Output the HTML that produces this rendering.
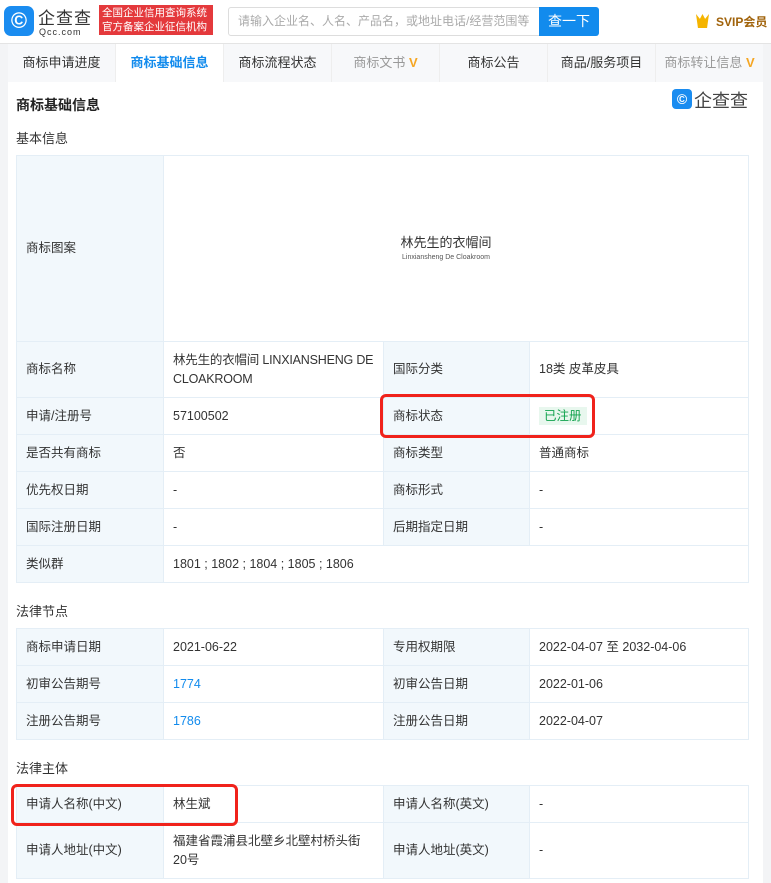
<!DOCTYPE html>
<html><head><meta charset="utf-8"><style>
*{box-sizing:border-box;margin:0;padding:0}
body{width:771px;height:883px;overflow:hidden;background:#f3f4f6;font-family:"Liberation Sans","Noto Sans CJK SC",sans-serif;font-size:13px;color:#333;position:relative}
.hdr{position:absolute;left:0;top:0;width:771px;height:44px;background:#fff;border-bottom:1px solid #e4e4e4}
.abs{position:absolute;white-space:nowrap}
.tabs{position:absolute;left:8px;top:44px;width:755px;height:38px;background:#f7f8fa;display:flex}
.tabs div{flex:1;text-align:center;line-height:38px;color:#333;border-right:1px solid #eee;white-space:nowrap}
.card{position:absolute;left:8px;top:82px;width:755px;height:801px;background:#fff}
table{position:absolute;left:16px;border-collapse:collapse;width:733px;table-layout:fixed}
td{border:1px solid #e4eef6;padding:0 9px;vertical-align:middle;line-height:19px;font-size:12.5px}
td.l{background:#f2f8fc;color:#333}
.sec{position:absolute;left:16px;font-size:13px;color:#333}
.red{position:absolute;border:3px solid #f0221b;border-radius:6px}
a{color:#128bed;text-decoration:none}
</style></head><body>
<div class="hdr">
 <div class="abs" style="left:4px;top:6px;width:30px;height:30px;background:#1a8cf0;border-radius:7px;color:#fff;font-size:22px;line-height:30px;text-align:center;font-weight:bold">©</div>
 <div class="abs" style="left:38px;top:4px;font-size:17px;color:#333;letter-spacing:1px">企查查</div>
 <div class="abs" style="left:39px;top:27px;font-size:9px;color:#333;letter-spacing:1px">Qcc.com</div>
 <div class="abs" style="left:99px;top:5px;width:114px;height:30px;background:#e4393c;color:#fff;font-size:10.5px;line-height:14px;padding:1px 3px">全国企业信用查询系统<br>官方备案企业征信机构</div>
 <div class="abs" style="left:228px;top:7px;width:312px;height:29px;border:1px solid #ddd;border-radius:3px 0 0 3px;color:#aaa;font-size:12px;line-height:27px;padding-left:9px;overflow:hidden">请输入企业名、人名、产品名，或地址电话/经营范围等</div>
 <div class="abs" style="left:539px;top:7px;width:60px;height:29px;background:#128bed;color:#fff;line-height:29px;text-align:center;font-size:14px;border-radius:0 3px 3px 0">查一下</div>
 <div class="abs" style="left:696px;top:14px;width:13px;height:14px;background:#f5b400;clip-path:polygon(0 0,30% 35%,50% 0,70% 35%,100% 0,85% 100%,15% 100%)"></div>
 <div class="abs" style="left:716px;top:13px;font-size:12px;color:#a0620a;font-weight:bold">SVIP会员</div>
</div>
<div class="tabs">
 <div>商标申请进度</div><div style="color:#128bed;font-weight:bold;background:#fff">商标基础信息</div><div>商标流程状态</div><div style="color:#999">商标文书 <span style="color:#f5a623;font-weight:bold">V</span></div><div>商标公告</div><div>商品/服务项目</div><div style="color:#999;border:none">商标转让信息 <span style="color:#f5a623;font-weight:bold">V</span></div>
</div>
<div class="card"></div>
<div class="sec" style="top:95px;font-weight:bold;font-size:14px;color:#222">商标基础信息</div>
<div class="abs" style="left:672px;top:89px;width:20px;height:20px;background:#1a8cf0;border-radius:4px;color:#fff;font-size:14px;line-height:20px;text-align:center;font-weight:bold">©</div>
<div class="abs" style="left:694px;top:87px;font-size:18px;color:#444">企查查</div>
<div class="sec" style="top:128px">基本信息</div>
<table style="top:155px;width:732px">
<colgroup><col style="width:147px"><col style="width:220px"><col style="width:146px"><col style="width:219px"></colgroup>
<tr style="height:186px"><td class="l">商标图案</td><td colspan="3" style="text-align:center"><div style="font-size:13px;color:#333;margin-left:-20px">林先生的衣帽间</div><div style="font-size:7px;color:#555;margin-left:-20px;line-height:12px">Linxiansheng De Cloakroom</div></td></tr>
<tr style="height:56px"><td class="l">商标名称</td><td style="padding-right:4px;letter-spacing:-0.2px">林先生的衣帽间 LINXIANSHENG DE CLOAKROOM</td><td class="l">国际分类</td><td>18类 皮革皮具</td></tr>
<tr style="height:37px"><td class="l">申请/注册号</td><td>57100502</td><td class="l">商标状态</td><td><span style="background:#e8f7ee;color:#12a34e;padding:2px 5px">已注册</span></td></tr>
<tr style="height:37px"><td class="l">是否共有商标</td><td>否</td><td class="l">商标类型</td><td>普通商标</td></tr>
<tr style="height:37px"><td class="l">优先权日期</td><td>-</td><td class="l">商标形式</td><td>-</td></tr>
<tr style="height:37px"><td class="l">国际注册日期</td><td>-</td><td class="l">后期指定日期</td><td>-</td></tr>
<tr style="height:37px"><td class="l">类似群</td><td colspan="3">1801 ; 1802 ; 1804 ; 1805 ; 1806</td></tr>
</table>
<div class="sec" style="top:601px">法律节点</div>
<table style="top:628px;width:732px">
<colgroup><col style="width:147px"><col style="width:220px"><col style="width:146px"><col style="width:219px"></colgroup>
<tr style="height:37px"><td class="l">商标申请日期</td><td>2021-06-22</td><td class="l">专用权期限</td><td>2022-04-07 至 2032-04-06</td></tr>
<tr style="height:37px"><td class="l">初审公告期号</td><td><a>1774</a></td><td class="l">初审公告日期</td><td>2022-01-06</td></tr>
<tr style="height:37px"><td class="l">注册公告期号</td><td><a>1786</a></td><td class="l">注册公告日期</td><td>2022-04-07</td></tr>
</table>
<div class="sec" style="top:758px">法律主体</div>
<table style="top:785px;width:732px">
<colgroup><col style="width:147px"><col style="width:220px"><col style="width:146px"><col style="width:219px"></colgroup>
<tr style="height:37px"><td class="l">申请人名称(中文)</td><td>林生斌</td><td class="l">申请人名称(英文)</td><td>-</td></tr>
<tr style="height:56px"><td class="l">申请人地址(中文)</td><td>福建省霞浦县北壁乡北壁村桥头街20号</td><td class="l">申请人地址(英文)</td><td>-</td></tr>
</table>
<div class="red" style="left:380px;top:394px;width:215px;height:44px"></div>
<div class="red" style="left:11px;top:784px;width:227px;height:42px"></div>
</body></html>
